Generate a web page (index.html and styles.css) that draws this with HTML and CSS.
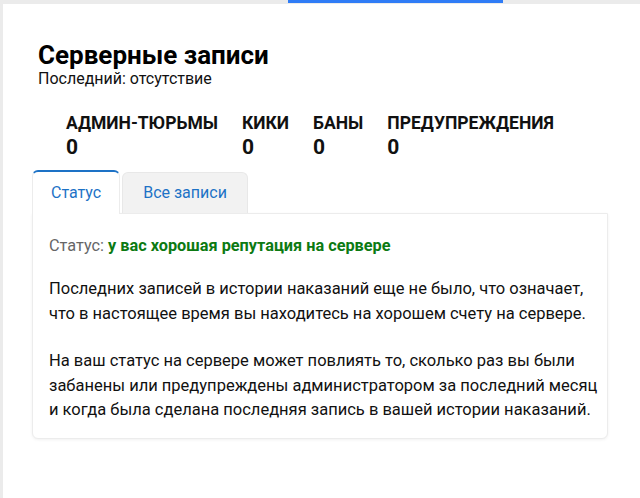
FILE: index.html
```html
<!DOCTYPE html>
<html lang="ru">
<head>
<meta charset="utf-8">
<link rel="stylesheet" href="styles.css">
</head>
<body>
<div class="topbar"><div class="indicator"></div></div>
<div class="main">
  <div class="page">
    <header class="head">
      <h1 class="title">Серверные записи</h1>
      <div class="subtitle">Последний: отсутствие</div>
    </header>
    <div class="stats">
      <div class="stat"><div class="stat-label">АДМИН-ТЮРЬМЫ</div><div class="stat-value">0</div></div>
      <div class="stat"><div class="stat-label">КИКИ</div><div class="stat-value">0</div></div>
      <div class="stat"><div class="stat-label">БАНЫ</div><div class="stat-value">0</div></div>
      <div class="stat"><div class="stat-label">ПРЕДУПРЕЖДЕНИЯ</div><div class="stat-value">0</div></div>
    </div>
    <div class="tabs">
      <div class="tab active">Статус</div>
      <div class="tab">Все записи</div>
    </div>
    <div class="card">
      <p class="status"><span class="status-label">Статус:</span> <span class="status-good">у вас хорошая репутация на сервере</span></p>
      <p class="text">Последних записей в истории наказаний еще не было, что означает, что в настоящее время вы находитесь на хорошем счету на сервере.</p>
      <p class="text">На ваш статус на сервере может повлиять то, сколько раз вы были забанены или предупреждены администратором за последний месяц и когда была сделана последняя запись в вашей истории наказаний.</p>
    </div>
  </div>
</div>
</body>
</html>
```
FILE: styles.css
```css
html, body {
  margin: 0;
  padding: 0;
  height: 100%;
}
body {
  background: #ebebeb;
  font-family: Roboto, "Noto Sans", Arial, sans-serif;
  color: #111;
  display: flex;
  flex-direction: column;
}
.topbar {
  height: 4px;
  display: flex;
  padding-left: 288px;
  box-sizing: border-box;
}
.indicator {
  width: 215px;
  height: 3px;
  background: #2f7cf6;
}
.main {
  flex: 1;
  margin-left: 3px;
  background: #fff;
}
.page {
  padding: 37px 32px 0 29px;
}
.head {
  padding-left: 6px;
}
.title {
  margin: 0;
  font-size: 26px;
  font-weight: 700;
  line-height: 28px;
  color: #000;
}
.subtitle {
  font-size: 16px;
  line-height: 20px;
  color: #111;
}
.stats {
  display: flex;
  gap: 24px;
  padding-left: 34px;
  margin-top: 22px;
}
.stat-label {
  font-size: 17.5px;
  font-weight: 700;
  line-height: 24px;
  color: #111;
}
.stat-value {
  font-size: 21px;
  font-weight: 700;
  line-height: 24px;
  color: #111;
}
.tabs {
  display: flex;
  align-items: flex-end;
  gap: 2px;
  margin-top: 11px;
}
.tab {
  font-size: 16px;
  color: #1d72c6;
  padding: 0 20px;
  height: 40px;
  line-height: 40px;
  background: #f2f2f2;
  border: 1px solid #e8e8e8;
  border-bottom: none;
  border-radius: 6px 6px 0 0;
}
.tab.active {
  background: #fff;
  height: 42px;
  line-height: 41px;
  border-top: 2px solid #1d72c6;
  border-color: #ececec;
  border-top-color: #1d72c6;
  padding: 0 18px;
  position: relative;
  z-index: 1;
  margin-bottom: -1px;
}
.card {
  border: 1px solid #ececec;
  border-radius: 0 0 6px 6px;
  box-shadow: 0 1px 3px rgba(0,0,0,0.06);
  padding: 20px 6px 15px 16px;
  background: #fff;
}
.card p {
  margin: 0;
}
.status {
  font-size: 16.3px;
  line-height: 24px;
  margin-bottom: 19px !important;
}
.status-label {
  color: #666;
}
.status-good {
  color: #0c7a12;
  font-weight: 700;
}
.text {
  font-size: 16.5px;
  line-height: 24.5px;
  color: #111;
  margin-bottom: 23px !important;
}
.text:last-child {
  margin-bottom: 0 !important;
}
```
